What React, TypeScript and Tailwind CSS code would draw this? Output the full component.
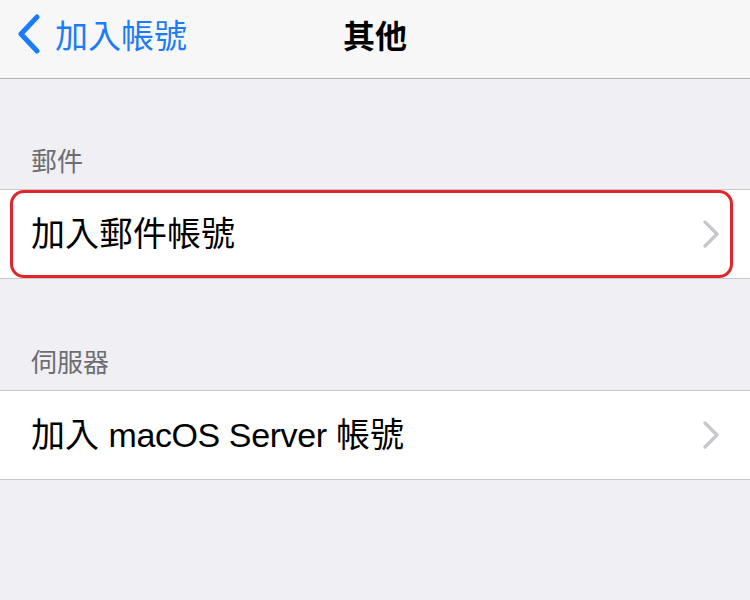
const font = { fontFamily: '"Noto Sans CJK TC", "Liberation Sans", sans-serif' };

function Chevron() {
  return (
    <svg width="18" height="28" viewBox="0 0 18 28" fill="none" className="shrink-0">
      <path d="M3 2 L15 14 L3 26" stroke="#c7c7cc" strokeWidth="3.2" strokeLinecap="round" strokeLinejoin="round" />
    </svg>
  );
}

function SectionHeader({ label, tall }: { label: string; tall?: boolean }) {
  return (
    <div className={`${tall ? "h-[111px]" : "h-[110px]"} flex items-end px-[31px] pb-[16px]`}>
      <span className="text-[26px] leading-none text-[#6d6d72]">{label}</span>
    </div>
  );
}

function Row({ children, outlined }: { children: React.ReactNode; outlined?: boolean }) {
  return (
    <div className="relative h-[90px] bg-white border-y border-[#c8c7cc] flex items-center justify-between pl-[31px] pr-[30px]">
      <span className="text-[34px] leading-none text-black" style={{ fontFamily: '"Liberation Sans", "Noto Sans CJK TC", sans-serif' }}>
        {children}
      </span>
      <Chevron />
      {outlined && (
        <div className="absolute left-[10px] right-[17px] top-0 bottom-0 border-[3px] border-[#e0262b] rounded-[14px]" />
      )}
    </div>
  );
}

export default function App() {
  return (
    <div className="w-[750px] h-[600px] bg-[#efeff4] overflow-hidden" style={font}>
      <div className="h-[79px] pb-[10px] bg-[#f7f7f8] border-b border-[#b2b2b2] grid grid-cols-[1fr_auto_1fr] items-center">
        <div className="flex items-center pl-[17px] gap-[14px] text-[#1a7cf6]">
          <svg width="24" height="40" viewBox="0 0 24 40" fill="none" className="shrink-0">
            <path d="M20 3 L4 20 L20 37" stroke="currentColor" strokeWidth="5" strokeLinecap="round" strokeLinejoin="round" />
          </svg>
          <span className="text-[33px] leading-none">加入帳號</span>
        </div>
        <div className="text-[32px] leading-none font-bold text-black">其他</div>
        <div />
      </div>
      <SectionHeader label="郵件" />
      <Row outlined>加入郵件帳號</Row>
      <SectionHeader label="伺服器" tall />
      <Row>
        加入 <span className="tracking-[-0.4px]">macOS Server</span> 帳號
      </Row>
    </div>
  );
}
